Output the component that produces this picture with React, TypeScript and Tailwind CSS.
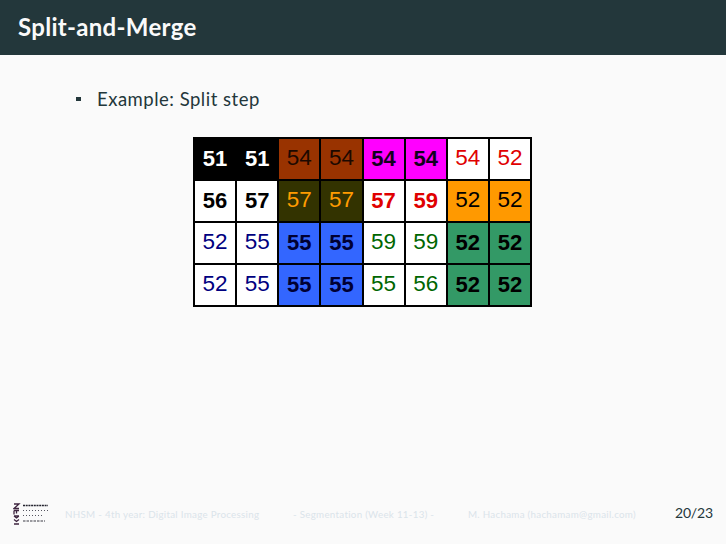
type Cell = { value: number; bg: string; text: string; bold?: boolean };

const black = { bg: "bg-black", text: "text-white", bold: true };
const brown = { bg: "bg-[#993300]", text: "text-[#1c0900]" };
const magenta = { bg: "bg-[#ff00ff]", text: "text-[#14001e]", bold: true };
const red = { bg: "bg-white", text: "text-[#e00000]" };
const white = { bg: "bg-white", text: "text-black", bold: true };
const olive = { bg: "bg-[#333300]", text: "text-[#ff9c00]" };
const redBold = { bg: "bg-white", text: "text-[#e00000]", bold: true };
const orange = { bg: "bg-[#ff9900]", text: "text-black" };
const navy = { bg: "bg-white", text: "text-[#000080]" };
const blue = { bg: "bg-[#3366ff]", text: "text-[#000033]", bold: true };
const green = { bg: "bg-white", text: "text-[#006600]" };
const sea = { bg: "bg-[#339966]", text: "text-black", bold: true };

const rows: Cell[][] = [
  [{ value: 51, ...black }, { value: 51, ...black }, { value: 54, ...brown }, { value: 54, ...brown }, { value: 54, ...magenta }, { value: 54, ...magenta }, { value: 54, ...red }, { value: 52, ...red }],
  [{ value: 56, ...white }, { value: 57, ...white }, { value: 57, ...olive }, { value: 57, ...olive }, { value: 57, ...redBold }, { value: 59, ...redBold }, { value: 52, ...orange }, { value: 52, ...orange }],
  [{ value: 52, ...navy }, { value: 55, ...navy }, { value: 55, ...blue }, { value: 55, ...blue }, { value: 59, ...green }, { value: 59, ...green }, { value: 52, ...sea }, { value: 52, ...sea }],
  [{ value: 52, ...navy }, { value: 55, ...navy }, { value: 55, ...blue }, { value: 55, ...blue }, { value: 55, ...green }, { value: 56, ...green }, { value: 52, ...sea }, { value: 52, ...sea }],
];

// Small institute logo: rotated letters beside four lines of tiny print
function Logo() {
  return (
    <svg width="36" height="22" viewBox="0 0 36 22" className="mt-[3px] shrink-0">
      <g fill="none" stroke="#3f2640" strokeWidth="1.3">
        <path d="M1 1h5L1 5.5h5M1 7.5h5M1 7.5v4M3.5 7.5v3M1 13h5M1 13l2.5 2 2.5-2M1 16.5l2.5 2 2.5-2M1 21h5" />
      </g>
      <g stroke="#23232e" strokeWidth="1.3" strokeDasharray="2 0.7">
        <path d="M10 2.5h25" />
      </g>
      <g stroke="#55555f" strokeWidth="1" strokeDasharray="1 2">
        <path d="M10 7.5h25M10 12.5h21" />
      </g>
      <g stroke="#3a3a44" strokeWidth="1.2" strokeDasharray="2.5 1">
        <path d="M10 18h22" />
      </g>
    </svg>
  );
}

export default function App() {
  return (
    <div className="flex h-[544px] w-[726px] flex-col overflow-hidden bg-[#fafafa] font-['Lato',sans-serif]">
      <header className="flex h-[55px] shrink-0 items-center bg-[#23373b] pl-[18px] pb-[1px]">
        <h1 className="text-[24px] font-bold leading-none tracking-[0.3px] text-[#fafafa]">Split-and-Merge</h1>
      </header>

      <main className="flex-1">
        <div className="mt-[34px] flex items-center pl-[76px]">
          <span className="mr-[16px] h-[4px] w-[5px] bg-[#23373b]" />
          <span className="text-[18.5px] leading-5 tracking-[0.5px] text-[#23373b]">Example: Split step</span>
        </div>

        <div className="ml-[193px] mt-[28px] grid w-[339px] grid-cols-8 gap-[2px] border-2 border-black bg-black font-['Liberation_Sans',sans-serif]">
          {rows.flat().map((cell, i) => (
            <div
              key={i}
              className={`flex h-[40px] items-center justify-center pb-[2px] ${cell.bg} ${cell.text} ${cell.bold ? "text-[22px] font-bold" : "text-[22.5px]"}`}
            >
              {cell.value}
            </div>
          ))}
        </div>
      </main>

      <footer className="flex h-[44px] shrink-0 items-start pl-[13px]">
        <Logo />
        <div className="mt-[6px] ml-[16px] flex text-[9.75px] leading-4 tracking-[0.3px] text-[#dbe4ea]">
          <span className="w-[228px]">NHSM - 4th year: Digital Image Processing</span>
          <span className="w-[175px]">- Segmentation (Week 11-13) -</span>
          <span className="w-[207px]">M. Hachama (hachamam@gmail.com)</span>
        </div>
        <span className="mt-[3px] text-[14px] leading-5 tracking-[-0.2px] text-[#23373b]">20/23</span>
      </footer>
    </div>
  );
}
